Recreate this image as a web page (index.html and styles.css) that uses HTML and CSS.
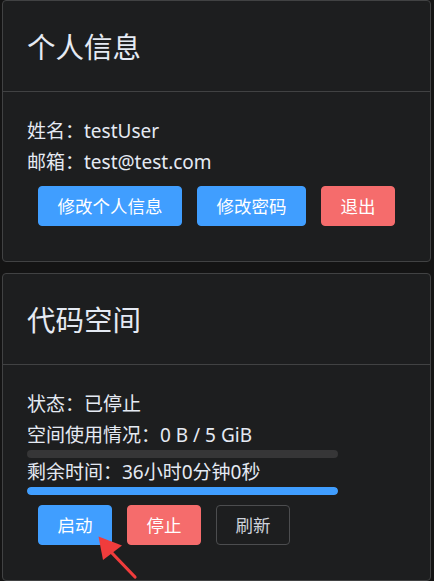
FILE: index.html
```html
<!DOCTYPE html>
<html lang="zh-CN">
<head>
<meta charset="utf-8">
<title>用户中心</title>
<link rel="stylesheet" href="styles.css">
</head>
<body>
<div class="page">
  <section class="card">
    <div class="card-header"><h2 class="card-title">个人信息</h2></div>
    <div class="card-body">
      <div class="line">姓名：testUser</div>
      <div class="line">邮箱：test@test.com</div>
      <div class="actions">
        <button class="btn btn-primary">修改个人信息</button>
        <button class="btn btn-primary">修改密码</button>
        <button class="btn btn-danger">退出</button>
      </div>
    </div>
  </section>
  <section class="card">
    <div class="card-header"><h2 class="card-title">代码空间</h2></div>
    <div class="card-body">
      <div class="line">状态：已停止</div>
      <div class="line">空间使用情况：0 B / 5 GiB</div>
      <div class="progress"><div class="progress-fill" style="width:0%"></div></div>
      <div class="line">剩余时间：36小时0分钟0秒</div>
      <div class="progress"><div class="progress-fill" style="width:100%"></div></div>
      <div class="actions">
        <button class="btn btn-primary">启动</button>
        <button class="btn btn-danger">停止</button>
        <button class="btn btn-plain">刷新</button>
      </div>
    </div>
  </section>
  <svg class="arrow" width="60" height="60" viewBox="0 0 60 60" aria-hidden="true">
    <polygon points="3.5,1.5 8,25 27,10.5" fill="#f03c3c"/>
    <line x1="16" y1="17" x2="40" y2="42" stroke="#f03c3c" stroke-width="3.2" stroke-linecap="round"/>
  </svg>
</div>
</body>
</html>
```

FILE: styles.css
```css
html, body {
  margin: 0;
  padding: 0;
  background: #141414;
  height: 100%;
  overflow: hidden;
}

body {
  font-family: "Noto Sans", "Noto Sans CJK SC", sans-serif;
  color: #e5eaf3;
  font-size: 19px;
}

.page {
  position: relative;
  padding-left: 2px;
}

.card {
  box-sizing: border-box;
  width: 429px;
  background: #1d1e1f;
  border: 1px solid #414243;
  border-radius: 4px;
  margin-bottom: 11px;
}

.card-header {
  padding: 25px 24px;
  border-bottom: 1px solid #414243;
}

.card-title {
  margin: 0;
  font-family: "Noto Sans CJK SC", sans-serif;
  font-weight: 400;
  font-size: 28.5px;
  line-height: 40px;
  color: #e5eaf3;
}

.card-body {
  padding: 25px 24px;
}

.line {
  line-height: 28px;
  white-space: nowrap;
}

.line + .line {
  margin-top: 3px;
}

.progress {
  width: 311px;
  height: 8px;
  margin-top: 1px;
  border-radius: 4px;
  background: #363637;
  overflow: hidden;
}

.progress-fill {
  height: 100%;
  background: #409eff;
  border-radius: 4px;
}

.actions {
  display: flex;
  gap: 15px;
  margin: 10px 0 10px 11px;
}

.btn {
  box-sizing: border-box;
  height: 40px;
  padding: 0 18.5px;
  border: 1px solid transparent;
  border-radius: 4px;
  font-family: "Noto Sans CJK SC", sans-serif;
  font-size: 17.5px;
  line-height: 1;
  color: #ffffff;
  cursor: pointer;
}

.btn-primary {
  background: #409eff;
  border-color: #409eff;
}

.btn-danger {
  background: #f56c6c;
  border-color: #f56c6c;
}

.btn-plain {
  background: transparent;
  border-color: #4c4d4f;
  color: #cfd3dc;
}

.arrow {
  position: absolute;
  left: 95px;
  top: 535px;
  overflow: visible;
}
```
